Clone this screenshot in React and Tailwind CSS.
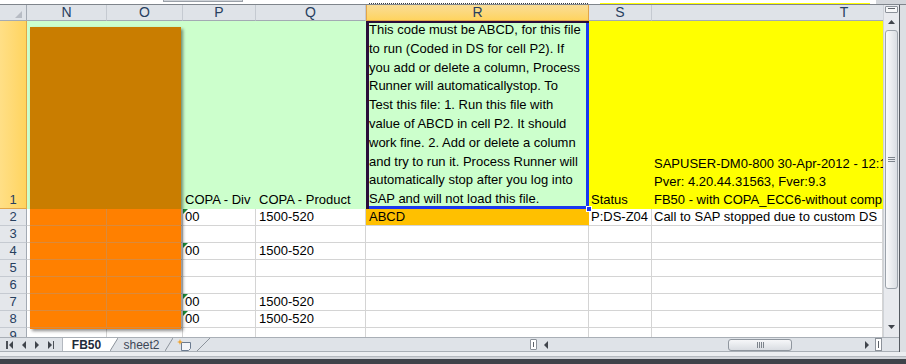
import React from 'react';

const rLines = [
  'This code must be ABCD, for this file',
  'to run (Coded in DS for cell P2). If',
  'you add or delete a column, Process',
  'Runner will automaticallystop. To',
  'Test this file: 1. Run this file with',
  'value of ABCD in cell P2. It should',
  'work fine. 2. Add or delete a column',
  'and try to run it. Process Runner will',
  'automatically stop after you log into',
  'SAP and will not load this file.',
];

const rows = [
  { n: 2, p: '00', q: '1500-520', r: 'ABCD', s: 'P:DS-Z04', t: 'Call to SAP stopped due to custom DS' },
  { n: 3 },
  { n: 4, p: '00', q: '1500-520' },
  { n: 5 },
  { n: 6 },
  { n: 7, p: '00', q: '1500-520' },
  { n: 8, p: '00', q: '1500-520' },
  { n: 9 },
];

const cell = 'overflow-hidden whitespace-nowrap border-r border-b border-[#d4d4d4] leading-[16px]';
const head = 'bg-[#dfe3e8] border-r border-b border-[#c5cad1] border-b-[#a3aab3] text-center';

const Tri = ({ dir }) => {
  if (dir === 'up') return <svg width="7" height="4" viewBox="0 0 7 4"><polygon points="0,4 3.5,0 7,4" fill="#40454c" /></svg>;
  if (dir === 'down') return <svg width="7" height="4" viewBox="0 0 7 4"><polygon points="0,0 7,0 3.5,4" fill="#40454c" /></svg>;
  if (dir === 'left') return <svg width="4" height="8" viewBox="0 0 4 8"><polygon points="4,0 4,8 0,4" fill="#40454c" /></svg>;
  return <svg width="4" height="8" viewBox="0 0 4 8"><polygon points="0,0 0,8 4,4" fill="#40454c" /></svg>;
};

const RowHead = ({ n }) => (
  <div className="w-[27px] shrink-0 border-r border-b border-[#c5cad1] border-r-[#a3aab3] bg-[#e4e7eb] text-center text-[13px] leading-[16px] text-[#27405f]">
    {n}
  </div>
);

const DataRow = ({ row }) => (
  <div className="flex h-[17px] shrink-0">
    <RowHead n={row.n} />
    <div className={`w-[80px] ${cell}`} />
    <div className={`w-[76px] ${cell}`} />
    <div className={`relative w-[73px] pl-[2px] ${cell}`}>
      {row.p && <span className="absolute left-0 top-0 h-0 w-0 border-t-[5px] border-r-[5px] border-t-[#1d8a3a] border-r-transparent" />}
      {row.p}
    </div>
    <div className={`w-[110px] pl-[3px] ${cell}`}>{row.q}</div>
    {row.r ? (
      <div className="w-[223px] shrink-0 overflow-hidden whitespace-nowrap border-r border-b border-r-[#ffc000] border-b-[#d4d4d4] bg-[#ffc000] pl-[3px] leading-[16px]">{row.r}</div>
    ) : (
      <div className={`w-[223px] ${cell}`} />
    )}
    <div className={`w-[63px] pl-[2px] ${cell}`}>{row.s}</div>
    <div className={`w-[231px] pl-[2px] ${cell}`}>{row.t}</div>
  </div>
);

export default function App() {
  return (
    <div className="flex h-[364px] w-[906px] flex-col overflow-hidden bg-[#dfe3e8] font-['Liberation_Sans',Arial,sans-serif] text-[13px] text-black">
      {/* clipped strip of the expanded formula bar */}
      <div className="flex h-[5px] shrink-0 border-b border-[#7f858c] bg-white">
        <div className="w-[163px]" />
        <div className="h-[2px] w-[80px] border-x border-b border-[#9aa0a8] bg-[#cfd3d8]" />
        <div className="w-[126px]" />
        <div className="flex w-[219px] flex-col justify-end">
          <div className="border-t border-dotted border-[#3a3a3a]" />
        </div>
        <div className="w-[12px]" />
        <div className="flex w-[270px] flex-col justify-end">
          <div className="h-px bg-[#ffff00]" />
        </div>
        <div className="flex-1" />
        <div className="h-[4px] w-[30px] bg-[#d3d6db]" />
      </div>

      <div className="flex h-[347px] shrink-0">
        <div className="flex w-[899px] flex-col">
          <div className="flex h-[332px] shrink-0">
            {/* sheet */}
            <div className="relative flex h-[332px] w-[883px] flex-col overflow-hidden bg-white">
              <div className="flex h-[16px] shrink-0 text-[14px] leading-[15px] text-[#27405f]">
                <div className="w-[27px] shrink-0 border-r border-b border-[#a3aab3] bg-[#dfe3e8]">
                  <svg width="26" height="15" viewBox="0 0 26 15">
                    <polygon points="22,6 22,13 15,13" fill="#b7bcc4" />
                  </svg>
                </div>
                <div className={`w-[80px] ${head}`}>N</div>
                <div className={`w-[76px] ${head}`}>O</div>
                <div className={`w-[73px] ${head}`}>P</div>
                <div className={`w-[110px] ${head}`}>Q</div>
                <div className="w-[223px] border-x border-b border-[#e2a548] bg-gradient-to-b from-[#f9dc95] to-[#ffd45e] text-center">R</div>
                <div className={`w-[63px] ${head}`}>S</div>
                <div className="w-[231px] overflow-hidden border-b border-[#a3aab3] bg-[#dfe3e8]">
                  <div className="w-[384px] text-center">T</div>
                </div>
              </div>

              <div className="flex h-[188px] shrink-0">
                <div className="flex w-[27px] shrink-0 items-end justify-center border-r border-b border-[#e2a548] bg-gradient-to-r from-[#ffdf86] to-[#ffd45e] text-[13px] leading-[17px] text-[#27405f]">1</div>
                <div className="w-[80px] bg-[#ccffcc]" />
                <div className="w-[76px] bg-[#ccffcc]" />
                <div className="flex w-[73px] items-end whitespace-nowrap bg-[#ccffcc] pl-[2px] leading-[18px]">COPA - Div</div>
                <div className="flex w-[110px] items-end overflow-hidden whitespace-nowrap bg-[#ccffcc] pl-[3px] leading-[18px]">COPA - Product</div>
                <div className="relative w-[223px] bg-[#ccffcc] pl-[3px] shadow-[inset_3px_2px_0_#2a0d3a,inset_-3px_-3px_0_#1b38f0]">
                  {rLines.map((l, i) => (
                    <div key={i} className="h-[18.8px] whitespace-nowrap leading-[18.8px]">{l}</div>
                  ))}
                  <span className="absolute -bottom-[3px] -right-[3px] h-[6px] w-[6px] border border-white bg-[#1b38f0]" />
                </div>
                <div className="flex w-[63px] items-end bg-[#ffff00] pl-[2px] leading-[18px]">Status</div>
                <div className="flex w-[231px] flex-col justify-end overflow-hidden whitespace-nowrap bg-[#ffff00] pl-[2px] leading-[18px]">
                  <div>SAPUSER-DM0-800 30-Apr-2012 - 12:1</div>
                  <div>Pver: 4.20.44.31563, Fver:9.3</div>
                  <div>FB50 - with COPA_ECC6-without comp</div>
                </div>
              </div>

              {rows.map((row) => (
                <DataRow key={row.n} row={row} />
              ))}

              {/* floating shape over columns N:O */}
              <div className="absolute left-[30px] top-[22px] flex h-[302px] w-[151px] flex-col bg-[#ff8000] shadow-[2px_2px_3px_rgba(0,0,0,0.45)]">
                <div className="h-[182px] shrink-0 bg-[#c97d00]" />
                {[0, 1, 2, 3, 4, 5, 6].map((i) => (
                  <div key={i} className="flex h-[17px] shrink-0 border-b border-[#da8a3c]">
                    <div className="w-[77px] border-r border-[#da8a3c]" />
                  </div>
                ))}
              </div>
            </div>

            {/* vertical scrollbar */}
            <div className="flex w-[16px] flex-col border-l border-[#cfd3d8] bg-[#e8eaee]">
              <div className="mx-[1px] mt-[1px] flex h-[7px] items-start rounded-[1px] border border-[#8c929a] bg-[#f7f8f9] px-[2px] pt-[1px]">
                <div className="h-px w-full bg-[#5d6269]" />
              </div>
              <div className="flex h-[17px] items-center justify-center">
                <Tri dir="up" />
              </div>
              <div className="mx-[1px] flex h-[259px] flex-col items-center justify-center gap-[1px] rounded-[3px] border border-[#9ca3ab] bg-gradient-to-r from-[#fbfbfc] to-[#dadee3]">
                <div className="h-px w-[7px] bg-[#7d848c]" />
                <div className="h-px w-[7px] bg-[#7d848c]" />
                <div className="h-px w-[7px] bg-[#7d848c]" />
              </div>
              <div className="flex-1" />
              <div className="mb-[3px] flex h-[14px] items-center justify-center">
                <Tri dir="down" />
              </div>
            </div>
          </div>

          {/* sheet tabs and horizontal scrollbar */}
          <div className="flex h-[15px] shrink-0 items-stretch border-t border-b border-[#a9afb6] bg-[#dfe3e8]">
            <div className="flex w-[63px] items-center border-r border-[#b3b8bf]">
              <div className="ml-[6px] flex items-center">
                <div className="h-[8px] w-[1.5px] bg-[#4d5259]" />
                <div className="ml-[1px]"><Tri dir="left" /></div>
              </div>
              <div className="ml-[9px]"><Tri dir="left" /></div>
              <div className="ml-[9px]"><Tri dir="right" /></div>
              <div className="ml-[9px] flex items-center">
                <Tri dir="right" />
                <div className="ml-[1px] h-[8px] w-[1.5px] bg-[#4d5259]" />
              </div>
            </div>
            <div className="flex w-[47px] items-center justify-center bg-white text-[12px] font-bold leading-none text-[#1f2b3b]">FB50</div>
            <svg width="8" height="13" viewBox="0 0 8 13" className="shrink-0">
              <polygon points="0,0 8,0 0,13" fill="#ffffff" />
              <line x1="0" y1="13" x2="8" y2="0" stroke="#8c939b" strokeWidth="1" />
            </svg>
            <div className="flex w-[47px] items-center justify-center text-[12px] leading-none text-[#3d4756]">sheet2</div>
            <svg width="8" height="13" viewBox="0 0 8 13" className="shrink-0">
              <line x1="0" y1="13" x2="8" y2="0" stroke="#8c939b" strokeWidth="1" />
            </svg>
            <div className="flex w-[24px] items-center justify-center">
              <svg width="16" height="12" viewBox="0 0 16 12">
                <path d="M4.5 3.5 H13.5 V9.5 L11.5 11.5 H4.5 Z" fill="#f3f5f8" stroke="#6b7b90" strokeWidth="1" />
                <path d="M3 0 L3.8 2.2 L6 3 L3.8 3.8 L3 6 L2.2 3.8 L0 3 L2.2 2.2 Z" fill="#f1a22a" />
              </svg>
            </div>
            <svg width="13" height="13" viewBox="0 0 13 13" className="shrink-0">
              <line x1="0" y1="13" x2="13" y2="0" stroke="#8c939b" strokeWidth="1" />
            </svg>
            <div className="flex-1" />
            <div className="my-[1px] flex w-[7px] justify-center rounded-[1px] border border-[#8c929a] bg-white">
              <div className="my-[2px] w-px bg-[#5d6269]" />
            </div>
            <div className="w-[4px]" />
            <div className="flex w-[9px] items-center justify-center"><Tri dir="left" /></div>
            <div className="flex w-[312px] items-center">
              <div className="ml-[178px] flex h-[12px] w-[64px] items-center justify-center gap-[1px] rounded-[3px] border border-[#8f969e] bg-gradient-to-b from-[#f6f7f9] to-[#d9dde2]">
                <div className="h-[6px] w-px bg-[#7d848c]" />
                <div className="h-[6px] w-px bg-[#7d848c]" />
                <div className="h-[6px] w-px bg-[#7d848c]" />
                <div className="h-[6px] w-px bg-[#7d848c]" />
              </div>
            </div>
            <div className="flex w-[9px] items-center justify-center"><Tri dir="right" /></div>
            <div className="w-[4px]" />
            <div className="flex w-[7px] justify-center border border-[#8c929a] bg-white">
              <div className="my-[2px] w-px bg-[#5d6269]" />
            </div>
            <div className="w-[17px]" />
          </div>
        </div>
        {/* window edge */}
        <div className="w-[7px] border-l border-[#555a61] bg-[#dcdfe3]" />
      </div>

      <div className="flex h-[12px] shrink-0 flex-col">
        <div className="h-[5px] border-b border-[#b4b9bf] bg-[#eceef1]" />
        <div className="h-[2px] bg-[#d0d3d8]" />
        <div className="flex-1 bg-[#3f434a]" />
      </div>
    </div>
  );
}
